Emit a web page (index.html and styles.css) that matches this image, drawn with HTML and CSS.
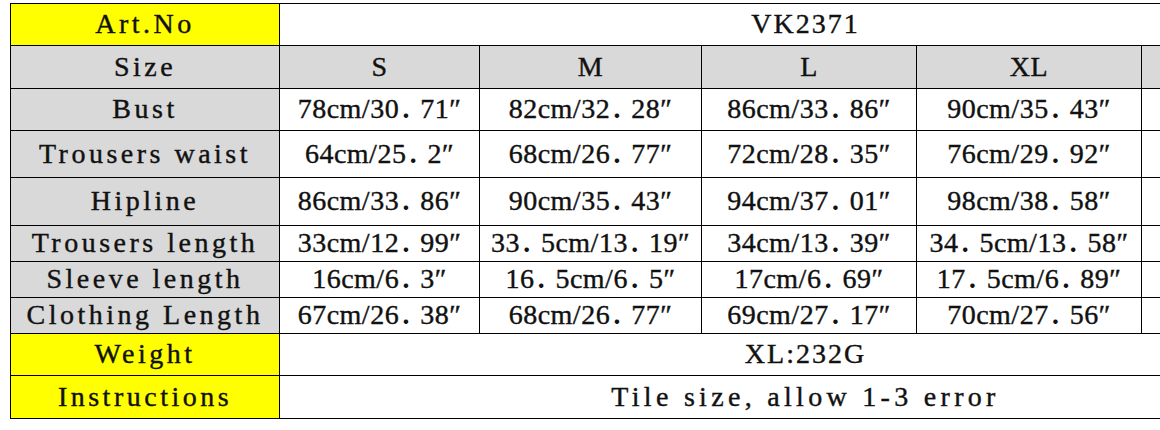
FILE: index.html
```html
<!DOCTYPE html>
<html lang="en">
<head>
    <meta charset="UTF-8">
    <meta name="viewport" content="width=device-width, initial-scale=1.0">
    <title>VK2371 Size Chart</title>
    <link rel="stylesheet" href="styles.css">
</head>
<body>
    <div class="sheet">
        <table class="size-chart">
            <colgroup>
                <col class="col-label">
                <col class="col-s">
                <col class="col-m">
                <col class="col-l">
                <col class="col-xl">
                <col class="col-extra">
            </colgroup>
            <tr class="row-art">
                <td class="label key">Art.No</td>
                <td colspan="6" class="wide">VK2371</td>
            </tr>
            <tr class="row-size head">
                <td class="label">Size</td>
                <td>S</td>
                <td>M</td>
                <td>L</td>
                <td>XL</td>
                <td></td>
            </tr>
            <tr class="row-bust">
                <td class="label">Bust</td>
                <td>78cm/30<span class="pt">．</span>71″</td>
                <td>82cm/32<span class="pt">．</span>28″</td>
                <td>86cm/33<span class="pt">．</span>86″</td>
                <td>90cm/35<span class="pt">．</span>43″</td>
                <td></td>
            </tr>
            <tr class="row-waist">
                <td class="label">Trousers waist</td>
                <td>64cm/25<span class="pt">．</span>2″</td>
                <td>68cm/26<span class="pt">．</span>77″</td>
                <td>72cm/28<span class="pt">．</span>35″</td>
                <td>76cm/29<span class="pt">．</span>92″</td>
                <td></td>
            </tr>
            <tr class="row-hip">
                <td class="label">Hipline</td>
                <td>86cm/33<span class="pt">．</span>86″</td>
                <td>90cm/35<span class="pt">．</span>43″</td>
                <td>94cm/37<span class="pt">．</span>01″</td>
                <td>98cm/38<span class="pt">．</span>58″</td>
                <td></td>
            </tr>
            <tr class="row-short">
                <td class="label">Trousers length</td>
                <td>33cm/12<span class="pt">．</span>99″</td>
                <td>33<span class="pt">．</span>5cm/13<span class="pt">．</span>19″</td>
                <td>34cm/13<span class="pt">．</span>39″</td>
                <td>34<span class="pt">．</span>5cm/13<span class="pt">．</span>58″</td>
                <td></td>
            </tr>
            <tr class="row-short">
                <td class="label">Sleeve length</td>
                <td>16cm/6<span class="pt">．</span>3″</td>
                <td>16<span class="pt">．</span>5cm/6<span class="pt">．</span>5″</td>
                <td>17cm/6<span class="pt">．</span>69″</td>
                <td>17<span class="pt">．</span>5cm/6<span class="pt">．</span>89″</td>
                <td></td>
            </tr>
            <tr class="row-short">
                <td class="label">Clothing Length</td>
                <td>67cm/26<span class="pt">．</span>38″</td>
                <td>68cm/26<span class="pt">．</span>77″</td>
                <td>69cm/27<span class="pt">．</span>17″</td>
                <td>70cm/27<span class="pt">．</span>56″</td>
                <td></td>
            </tr>
            <tr class="row-weight">
                <td class="label key">Weight</td>
                <td colspan="6" class="wide">XL:232G</td>
            </tr>
            <tr class="row-note">
                <td class="label key">Instructions</td>
                <td colspan="6" class="wide note">Tile size, allow 1-3 error</td>
            </tr>
        </table>
    </div>
</body>
</html>
```

FILE: styles.css
```css
body {
    margin: 0;
    background-color: #fff;
    overflow: hidden;
}
.sheet {
    padding: 3px 0 0 10px;
}
.size-chart {
    border-collapse: collapse;
    table-layout: fixed;
    width: 1321px;
    font-family: "Liberation Serif", "Noto Sans CJK SC", serif;
    font-size: 28px;
    line-height: 1.1;
    color: #111;
    -webkit-text-stroke: 0.4px #111;
}
.col-label { width: 269px; }
.col-s { width: 200px; }
.col-m { width: 222px; }
.col-l { width: 215px; }
.col-xl { width: 225px; }
.col-extra { width: 190px; }
.size-chart td {
    border: 1px solid #000;
    padding: 0;
    text-align: center;
    vertical-align: middle;
    white-space: nowrap;
    letter-spacing: 0.5px;
}
.size-chart td.label {
    background-color: #d9d9d9;
    letter-spacing: 3.5px;
}
.size-chart td.key {
    background-color: #ffff00;
}
.size-chart td.wide {
    letter-spacing: 2px;
}
.size-chart td.note {
    letter-spacing: 4.3px;
}
.pt {
    letter-spacing: -7px;
    -webkit-text-stroke: 0;
}
.head td {
    background-color: #d9d9d9;
}
.row-art { height: 42px; }
.row-size { height: 43px; }
.row-bust { height: 42px; }
.row-waist { height: 47px; }
.row-hip { height: 48px; }
.row-short { height: 36px; }
.row-weight { height: 42px; }
.row-note { height: 43px; }
```
